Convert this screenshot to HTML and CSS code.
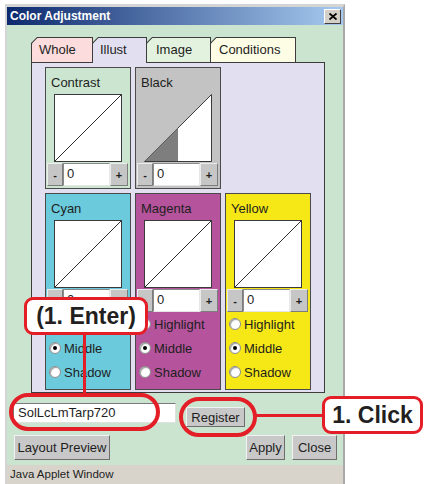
FILE: index.html
```html
<!DOCTYPE html>
<html lang="en">
<head>
    <meta charset="UTF-8">
    <meta name="viewport" content="width=device-width, initial-scale=1.0">
    <title>Color Adjustment</title>
    <link rel="stylesheet" href="styles.css">
</head>
<body>
    <div class="window">
        <div class="titlebar">
            <span class="title">Color Adjustment</span>
            <span class="close-btn">
                <svg width="8" height="7" viewBox="0 0 8 7"><path d="M0.5 0.5 L7.5 6.5 M7.5 0.5 L0.5 6.5" stroke="#000" stroke-width="1.8"/></svg>
            </span>
        </div>

        <div class="content">
            <div class="tabset">
                <div class="tabs">
                    <div class="tab tab-whole"><span>Whole</span></div>
                    <div class="tab tab-illust active"><span>Illust</span></div>
                    <div class="tab tab-image"><span>Image</span></div>
                    <div class="tab tab-conditions"><span>Conditions</span></div>
                </div>

                <div class="panel">
                    <div class="cards">
                        <div class="card card-contrast">
                            <div class="card-label">Contrast</div>
                            <svg class="curve" width="68" height="68" viewBox="0 0 68 68">
                                <rect x="0.5" y="0.5" width="67" height="67" fill="#fff" stroke="#3a3a3a"/>
                                <line x1="1" y1="67" x2="67" y2="1" stroke="#2e2e2e"/>
                            </svg>
                            <div class="spinner"><span class="spin-btn">-</span><span class="spin-val">0</span><span class="spin-btn spin-plus">+</span></div>
                        </div>

                        <div class="card card-black">
                            <div class="card-label">Black</div>
                            <svg class="curve" width="68" height="68" viewBox="0 0 68 68">
                                <polygon points="0.5,67.5 67.5,0.5 67.5,67.5" fill="#fff" stroke="#3a3a3a"/>
                                <polygon points="1,67 34,67 34,34" fill="#7e7e7e"/>
                            </svg>
                            <div class="spinner"><span class="spin-btn">-</span><span class="spin-val">0</span><span class="spin-btn spin-plus">+</span></div>
                        </div>

                        <div class="card-gap"></div>

                        <div class="card card-cyan">
                            <div class="card-label">Cyan</div>
                            <svg class="curve" width="68" height="68" viewBox="0 0 68 68">
                                <rect x="0.5" y="0.5" width="67" height="67" fill="#fff" stroke="#3a3a3a"/>
                                <line x1="1" y1="67" x2="67" y2="1" stroke="#2e2e2e"/>
                            </svg>
                            <div class="spinner"><span class="spin-btn">-</span><span class="spin-val">0</span><span class="spin-btn spin-plus">+</span></div>
                            <div class="radios">
                                <div class="radio-row"><span class="radio"></span>Highlight</div>
                                <div class="radio-row"><span class="radio checked"></span>Middle</div>
                                <div class="radio-row"><span class="radio"></span>Shadow</div>
                            </div>
                        </div>

                        <div class="card card-magenta">
                            <div class="card-label">Magenta</div>
                            <svg class="curve" width="68" height="68" viewBox="0 0 68 68">
                                <rect x="0.5" y="0.5" width="67" height="67" fill="#fff" stroke="#3a3a3a"/>
                                <line x1="1" y1="67" x2="67" y2="1" stroke="#2e2e2e"/>
                            </svg>
                            <div class="spinner"><span class="spin-btn">-</span><span class="spin-val">0</span><span class="spin-btn spin-plus">+</span></div>
                            <div class="radios">
                                <div class="radio-row"><span class="radio"></span>Highlight</div>
                                <div class="radio-row"><span class="radio checked"></span>Middle</div>
                                <div class="radio-row"><span class="radio"></span>Shadow</div>
                            </div>
                        </div>

                        <div class="card card-yellow">
                            <div class="card-label">Yellow</div>
                            <svg class="curve" width="68" height="68" viewBox="0 0 68 68">
                                <rect x="0.5" y="0.5" width="67" height="67" fill="#fff" stroke="#3a3a3a"/>
                                <line x1="1" y1="67" x2="67" y2="1" stroke="#2e2e2e"/>
                            </svg>
                            <div class="spinner"><span class="spin-btn">-</span><span class="spin-val">0</span><span class="spin-btn spin-plus">+</span></div>
                            <div class="radios">
                                <div class="radio-row"><span class="radio"></span>Highlight</div>
                                <div class="radio-row"><span class="radio checked"></span>Middle</div>
                                <div class="radio-row"><span class="radio"></span>Shadow</div>
                            </div>
                        </div>
                    </div>
                </div>
            </div>

            <div class="entry-row">
                <div class="name-field">SolLcLmTarp720</div>
                <div class="btn btn-register">Register</div>
            </div>

            <div class="button-row">
                <div class="btn btn-preview">Layout Preview</div>
                <div class="btn btn-apply">Apply</div>
                <div class="btn btn-close">Close</div>
            </div>
        </div>

        <div class="statusbar">Java Applet Window</div>
    </div>

    <!-- callouts drawn over the dialog -->
    <div class="ring ring-name"></div>
    <div class="ring ring-register"></div>
    <div class="leader leader-enter"></div>
    <div class="leader leader-click"></div>
    <div class="callout callout-enter">(1. Enter)</div>
    <div class="callout callout-click">1. Click</div>
</body>
</html>
```

FILE: styles.css
```css
body {
    margin: 0;
    width: 424px;
    height: 484px;
    overflow: hidden;
    position: relative;
    background: #fff;
    font-family: "Liberation Sans", Arial, sans-serif;
    font-size: 13px;
    color: #1e1e1e;
}

/* dialog frame */
.window {
    margin: 4px 0 0 5px;
    width: 340px;
    box-sizing: border-box;
    border: 2px solid #d4d4d4;
    border-top-width: 3px;
    border-right-color: #a9a9a9;
    background: #cbe4cf;
}
.titlebar {
    height: 18px;
    display: flex;
    align-items: center;
    justify-content: space-between;
    padding: 0 2px 0 3px;
    background: linear-gradient(to right, #0d2a6e, #a6caf0);
}
.title {
    color: #fff;
    font-weight: bold;
    font-size: 12px;
}
.close-btn {
    width: 15px;
    height: 13px;
    display: flex;
    align-items: center;
    justify-content: center;
    background: #d4d0c8;
    border: 1px solid;
    border-color: #fff #404040 #404040 #fff;
}

.content {
    height: 440px;
    box-sizing: border-box;
    padding-top: 12px;
}

/* tabs */
.tabset {
    margin-left: 24px;
}
.tabs {
    display: flex;
    align-items: flex-start;
    height: 26px;
    margin-bottom: -1px;
    position: relative;
    z-index: 1;
}
.tab {
    height: 25px;
    box-sizing: border-box;
    padding: 1px 1px 0 1px;
    margin-left: -1px;
    background: #3c3c3c;
    clip-path: polygon(0 6px, 6px 0, 100% 0, 100% 100%, 0 100%);
}
.tab span {
    display: block;
    height: 100%;
    padding-left: 7px;
    line-height: 24px;
    clip-path: polygon(0 5.4px, 5.4px 0, 100% 0, 100% 100%, 0 100%);
}
.tab.active {
    height: 26px;
}
.tab-whole { width: 62px; margin-left: 0; }
.tab-whole span { background: #fcdcdc; }
.tab-illust { width: 55px; }
.tab-illust span { background: #e1dff0; }
.tab-image { width: 65px; }
.tab-image span { background: #e2f2de; padding-left: 9px; }
.tab-conditions { width: 86px; }
.tab-conditions span { background: #fdfce4; padding-left: 8px; }

/* panel with the curve cards */
.panel {
    width: 294px;
    height: 331px;
    box-sizing: border-box;
    border: 1px solid #3c3c3c;
    background: #e1dff0;
    padding: 4px 0 0 13px;
}
.cards {
    display: grid;
    grid-template-columns: repeat(3, 86px);
    grid-template-rows: 122px 197px;
    gap: 4px;
}
.card {
    border: 1px solid #4a4a4a;
    padding-top: 7px;
    box-sizing: border-box;
}
.card-contrast { background: #cbe5d0; }
.card-black { background: #c3c3c3; }
.card-cyan { background: #6bcbdc; }
.card-magenta { background: #b5549c; }
.card-yellow { background: #f6e817; }

.card-label {
    padding-left: 5px;
    line-height: 16px;
}
.curve {
    display: block;
    margin: 3px auto 0;
}

.spinner {
    display: flex;
    height: 23px;
    margin: 1px 0 0 1px;
}
.spin-btn {
    width: 16px;
    box-sizing: border-box;
    display: flex;
    align-items: center;
    justify-content: center;
    background: #c6c6c6;
    border: 1px solid;
    border-color: #ececec #7c7c7c #7c7c7c #ececec;
    font-size: 11px;
    font-weight: bold;
}
.spin-plus {
    width: 18px;
}
.spin-val {
    width: 47px;
    box-sizing: border-box;
    background: #fff;
    border: 1px solid;
    border-color: #8a8a8a #e6e6e6 #e6e6e6 #8a8a8a;
    padding-left: 3px;
    line-height: 20px;
}

.radio-row {
    display: flex;
    align-items: center;
    height: 24px;
    padding-left: 3px;
}
.radio {
    width: 12px;
    height: 12px;
    box-sizing: border-box;
    margin-right: 3px;
    border-radius: 50%;
    background: #fff;
    border: 1px solid #8c8c8c;
    box-shadow: inset 1px 1px 1px #a0a0a0;
    display: flex;
    align-items: center;
    justify-content: center;
}
.radio.checked::after {
    content: "";
    width: 4px;
    height: 4px;
    border-radius: 50%;
    background: #000;
}

/* name + buttons */
.entry-row {
    display: flex;
    align-items: flex-start;
    margin: 10px 0 0 6px;
}
.name-field {
    width: 163px;
    height: 20px;
    box-sizing: border-box;
    background: #fff;
    border: 1px solid;
    border-color: #7a7a7a #e0e0e0 #e0e0e0 #7a7a7a;
    padding-left: 4px;
    line-height: 18px;
}
.btn {
    height: 25px;
    box-sizing: border-box;
    display: flex;
    align-items: center;
    justify-content: center;
    background: #c8c8c8;
    border: 1px solid;
    border-color: #f2f2f2 #6e6e6e #6e6e6e #f2f2f2;
}
.btn-register {
    width: 59px;
    height: 20px;
    margin: 4px 0 0 10px;
}
.button-row {
    display: flex;
    gap: 7px;
    margin: 8px 6px 0 7px;
}
.btn-preview { width: 96px; margin-right: auto; }
.btn-apply { width: 39px; }
.btn-close { width: 45px; }

.statusbar {
    height: 22px;
    padding-left: 3px;
    background: #d8d4cc;
    font-size: 11.5px;
    line-height: 19px;
}

/* red annotation overlays */
.ring {
    position: absolute;
    box-sizing: border-box;
    border: 4px solid #e31e26;
    border-radius: 20px;
}
.ring-name {
    left: 9px;
    top: 393px;
    width: 151px;
    height: 38px;
}
.ring-register {
    left: 179px;
    top: 397px;
    width: 78px;
    height: 40px;
}
.leader {
    position: absolute;
    background: #e31e26;
}
.leader-enter {
    left: 83px;
    top: 334px;
    width: 3px;
    height: 61px;
}
.leader-click {
    left: 256px;
    top: 414px;
    width: 68px;
    height: 3px;
}
.callout {
    position: absolute;
    box-sizing: border-box;
    height: 38px;
    display: flex;
    align-items: center;
    justify-content: center;
    background: #fff;
    border: 3px solid #e31e26;
    border-radius: 9px;
    font-size: 23px;
    font-weight: bold;
    color: #231f20;
}
.callout-enter {
    left: 24px;
    top: 297px;
    width: 124px;
}
.callout-click {
    left: 322px;
    top: 396px;
    width: 101px;
}
```
